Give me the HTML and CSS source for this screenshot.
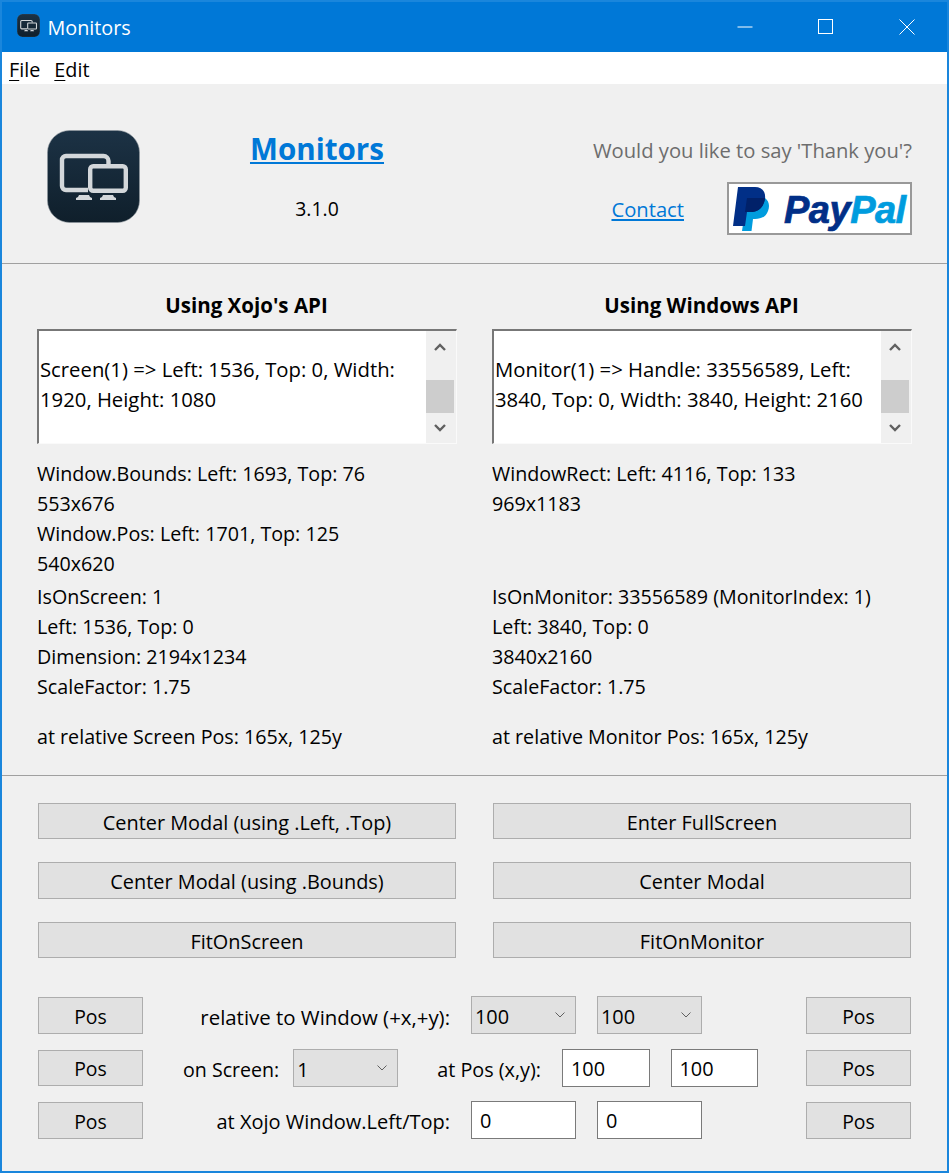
FILE: index.html
```html
<!DOCTYPE html>
<html lang="en">
<head>
<meta charset="utf-8">
<title>Monitors</title>
<link rel="stylesheet" href="styles.css">
</head>
<body>
<svg class="defs" width="0" height="0" aria-hidden="true">
  <defs>
    <linearGradient id="tile" x1="0" y1="0" x2="0" y2="1">
      <stop offset="0" stop-color="#1c3245"/>
      <stop offset="1" stop-color="#0f1f2b"/>
    </linearGradient>
    <symbol id="appicon" viewBox="0 0 93 93">
      <rect x="0.5" y="0.5" width="92" height="92" rx="22" fill="url(#tile)" stroke="#8f979d" stroke-width="0.6"/>
      <path d="M61.5 34V31a5 5 0 0 0-5-5H19a4 4 0 0 0-4 4v26a4 4 0 0 0 4 4h22" fill="none" stroke="#d3d7da" stroke-width="4.4"/>
      <rect x="43.2" y="36.2" width="35.6" height="24.6" rx="3" fill="none" stroke="#d3d7da" stroke-width="4.4"/>
      <path d="M32 65h10l1 2 2 1v2H29v-2l2-1zM56 65h10l1 2 2 1v2H53v-2l2-1z" fill="#d3d7da"/>
    </symbol>
  </defs>
</svg>
<div class="window">
  <header class="titlebar">
    <svg class="titleicon"><use href="#appicon"/></svg>
    <span class="titletext">Monitors</span>
    <div class="winbtns">
      <svg class="winbtn" viewBox="0 0 16 16"><path d="M0.5 8h15" stroke="#fff" fill="none"/></svg>
      <svg class="winbtn" viewBox="0 0 16 16"><rect x="0.5" y="0.5" width="14" height="14" stroke="#fff" fill="none"/></svg>
      <svg class="winbtn" viewBox="0 0 16 16"><path d="M0.5 0.5l15 15M15.5 0.5l-15 15" stroke="#fff" fill="none"/></svg>
    </div>
  </header>
  <nav class="menubar"><span class="menuitem"><u>F</u>ile</span><span class="menuitem"><u>E</u>dit</span></nav>
  <section class="about">
    <div class="about-icon"><svg class="logo"><use href="#appicon"/></svg></div>
    <div class="about-name">
      <a class="apptitle">Monitors</a>
      <div class="version">3.1.0</div>
    </div>
    <div class="about-thanks">
      <div class="thanks">Would you like to say 'Thank you'?</div>
      <div class="thanks-row">
        <a class="contact">Contact</a>
        <div class="paypal">
          <svg class="pp-mark" viewBox="0 0 36 44">
            <path d="M14 11H32C36 14 37 19 35 24C33 30 28 32 22 32H20L18.5 44H9Z" fill="#009cde"/>
            <path d="M5 0H22C29 0 33 5 32 12C30 21 25 25 17 25H14L12 39H0Z" fill="#012f87"/>
            <path d="M14 11H32C31 20 26 25 17 25H12Z" fill="#012169"/>
          </svg>
          <span class="pp-word"><span class="pp-pay">Pay</span><span class="pp-pal">Pal</span></span>
        </div>
      </div>
    </div>
  </section>
  <hr class="rule">
  <section class="info">
    <div class="col">
      <h2 class="colhead">Using Xojo's API</h2>
      <div class="listbox">
        <div class="listtext">Screen(1) =&gt; Left: 1536, Top: 0, Width: 1920, Height: 1080</div>
        <div class="scroll">
          <svg class="arrow" viewBox="0 0 12 8"><path d="M1 7l5-5 5 5" fill="none" stroke="#606060" stroke-width="2.4"/></svg>
          <div class="thumb"></div>
          <svg class="arrow" viewBox="0 0 12 8"><path d="M1 1l5 5 5-5" fill="none" stroke="#606060" stroke-width="2.4"/></svg>
        </div>
      </div>
      <div class="lines first">
        <div>Window.Bounds: Left: 1693, Top: 76</div>
        <div>553x676</div>
        <div>Window.Pos: Left: 1701, Top: 125</div>
        <div>540x620</div>
      </div>
      <div class="lines second">
        <div>IsOnScreen: 1</div>
        <div>Left: 1536, Top: 0</div>
        <div>Dimension: 2194x1234</div>
        <div>ScaleFactor: 1.75</div>
      </div>
      <div class="lines third"><div>at relative Screen Pos: 165x, 125y</div></div>
    </div>
    <div class="col">
      <h2 class="colhead">Using Windows API</h2>
      <div class="listbox">
        <div class="listtext">Monitor(1) =&gt; Handle: 33556589, Left: 3840, Top: 0, Width: 3840, Height: 2160</div>
        <div class="scroll">
          <svg class="arrow" viewBox="0 0 12 8"><path d="M1 7l5-5 5 5" fill="none" stroke="#606060" stroke-width="2.4"/></svg>
          <div class="thumb"></div>
          <svg class="arrow" viewBox="0 0 12 8"><path d="M1 1l5 5 5-5" fill="none" stroke="#606060" stroke-width="2.4"/></svg>
        </div>
      </div>
      <div class="lines first">
        <div>WindowRect: Left: 4116, Top: 133</div>
        <div>969x1183</div>
        <div>&nbsp;</div>
        <div>&nbsp;</div>
      </div>
      <div class="lines second">
        <div>IsOnMonitor: 33556589 (MonitorIndex: 1)</div>
        <div>Left: 3840, Top: 0</div>
        <div>3840x2160</div>
        <div>ScaleFactor: 1.75</div>
      </div>
      <div class="lines third"><div>at relative Monitor Pos: 165x, 125y</div></div>
    </div>
  </section>
  <hr class="rule">
  <section class="actions">
    <button class="btn">Center Modal (using .Left, .Top)</button>
    <button class="btn">Enter FullScreen</button>
    <button class="btn">Center Modal (using .Bounds)</button>
    <button class="btn">Center Modal</button>
    <button class="btn">FitOnScreen</button>
    <button class="btn">FitOnMonitor</button>
  </section>
  <section class="positions">
    <div class="posrow">
      <button class="btn pos">Pos</button>
      <div class="posmid wide">
        <span class="poslabel big">relative to Window (+x,+y):</span>
        <div class="combo"><span>100</span><svg class="chev" viewBox="0 0 10 6"><path d="M0.5 0.5l4.5 4.5 4.5-4.5" fill="none" stroke="#606060"/></svg></div>
        <div class="combo"><span>100</span><svg class="chev" viewBox="0 0 10 6"><path d="M0.5 0.5l4.5 4.5 4.5-4.5" fill="none" stroke="#606060"/></svg></div>
      </div>
      <button class="btn pos">Pos</button>
    </div>
    <div class="posrow middle">
      <button class="btn pos">Pos</button>
      <div class="posmid narrow">
        <span class="poslabel gap14">on Screen:</span>
        <div class="combo"><span>1</span><svg class="chev" viewBox="0 0 10 6"><path d="M0.5 0.5l4.5 4.5 4.5-4.5" fill="none" stroke="#606060"/></svg></div>
        <span class="poslabel push">at Pos (x,y):</span>
        <div class="field short">100</div>
        <div class="field short">100</div>
      </div>
      <button class="btn pos">Pos</button>
    </div>
    <div class="posrow">
      <button class="btn pos">Pos</button>
      <div class="posmid wide">
        <span class="poslabel">at Xojo Window.Left/Top:</span>
        <div class="field">0</div>
        <div class="field">0</div>
      </div>
      <button class="btn pos">Pos</button>
    </div>
  </section>
</div>
</body>
</html>
```
FILE: styles.css
```css
* { box-sizing: border-box; }
html, body { margin: 0; padding: 0; }
body {
  width: 949px;
  height: 1173px;
  overflow: hidden;
  background: #f0f0f0;
  font-family: "Open Sans", "Noto Sans", sans-serif;
  font-size: 19.9px;
  line-height: 30px;
  color: #000;
}
.defs { position: absolute; }
.window {
  width: 949px;
  height: 1173px;
  border: 2px solid #1a86dc;
  background: #f0f0f0;
  display: flex;
  flex-direction: column;
}
.titlebar {
  height: 50px;
  flex: none;
  background: #0078d7;
  color: #fff;
  display: flex;
  align-items: center;
  padding-left: 14.5px;
}
.titleicon { width: 23px; height: 23px; margin: 0 8px 3px 0; }
.titletext { font-size: 19.8px; margin-top: 1px; }
.winbtns {
  margin-left: auto;
  display: flex;
  gap: 65px;
  padding-right: 32px;
  margin-top: -1px;
}
.winbtn { width: 16px; height: 16px; }
.menubar {
  height: 32px;
  flex: none;
  background: #fff;
  display: flex;
  align-items: center;
  gap: 14px;
  padding-left: 7px;
  padding-top: 4px;
  font-size: 19.8px;
}
.about {
  height: 179px;
  flex: none;
  display: grid;
  grid-template-columns: 138px 354px 1fr;
  padding: 44px 35px 0 0;
}
.about-icon { padding: 2px 0 0 44.5px; }
.logo { display: block; width: 93px; height: 93px; }
.about-name { display: flex; flex-direction: column; align-items: center; }
.apptitle {
  font-size: 29.6px;
  line-height: 42px;
  font-weight: 700;
  color: #0078d7;
  text-decoration: underline;
}
.version { margin-top: 24px; font-size: 19.4px; }
.about-thanks { display: flex; flex-direction: column; align-items: flex-end; padding-top: 7px; }
.thanks { color: #6d6d6d; font-size: 20.2px; }
.thanks-row { display: flex; align-items: center; gap: 43px; margin-top: 17px; }
.contact { color: #0078d7; text-decoration: underline; font-size: 20.2px; }
.paypal {
  width: 185px;
  height: 53px;
  border: 2px solid #999;
  background: #fff;
  display: flex;
  align-items: center;
  padding-left: 4px;
  gap: 15px;
}
.pp-mark { width: 36px; height: 44px; flex: none; }
.pp-word {
  font-family: "Liberation Sans", sans-serif;
  font-style: italic;
  font-weight: 700;
  font-size: 38px;
  letter-spacing: -0.5px;
  line-height: 1;
  margin-top: 3px;
  -webkit-text-stroke: 0.7px currentColor;
}
.pp-pay { color: #012f87; }
.pp-pal { color: #009cde; }
.rule { margin: 0; height: 1px; border: 0; background: #a0a0a0; flex: none; }
.info {
  height: 511px;
  flex: none;
  display: grid;
  grid-template-columns: 420px 420px;
  column-gap: 35px;
  padding: 26px 35px 0;
}
.colhead {
  margin: 0 0 9px;
  padding-right: 1px;
  font-size: 20.5px;
  line-height: 30px;
  font-weight: 700;
  text-align: center;
}
.listbox {
  height: 115px;
  display: flex;
  background: #fff;
  border-top: 2px solid #777;
  border-left: 2px solid #777;
  border-right: 1px solid #fafafa;
  border-bottom: 1px solid #fafafa;
}
.listtext { flex: 1; padding: 23px 0 0 1px; font-size: 20.3px; }
.scroll {
  width: 30px;
  flex: none;
  background: #f0f0f0;
  display: flex;
  flex-direction: column;
  align-items: center;
  padding: 12px 2px 0 0;
}
.arrow { width: 12px; height: 8px; flex: none; }
.thumb { width: 100%; height: 33px; margin: 29px 0 11px; background: #cdcdcd; flex: none; }
.lines { font-size: 19.7px; }
.first { margin-top: 15px; }
.second { margin-top: 3px; }
.third { margin-top: 20px; }
.actions {
  flex: none;
  display: grid;
  grid-template-columns: 418px 418px;
  grid-template-rows: 36px 37px 36px;
  column-gap: 37px;
  row-gap: 23px;
  padding: 27px 36px 0;
}
.btn {
  background: #e1e1e1;
  border: 1px solid #adadad;
  font: inherit;
  color: inherit;
  padding: 3px 0 0;
}
.positions {
  flex: none;
  display: flex;
  flex-direction: column;
  gap: 15px;
  padding: 39px 36px 0;
}
.posrow { display: flex; align-items: flex-start; height: 37px; }
.middle { margin-top: 1px; }
.pos { width: 105px; height: 37px; flex: none; font-size: 19.4px; padding-top: 2px; }
.middle .pos { height: 36px; }
.posmid { flex: 1; height: 38px; margin-top: -1px; display: flex; align-items: center; justify-content: flex-end; gap: 21px; }
.poslabel { padding-top: 3px; font-size: 20px; }
.big { font-size: 20.4px; }
.wide { padding-right: 104px; }
.narrow { padding-right: 48px; }
.gap14 { margin-right: -7px; font-size: 19.6px; }
.push { margin-left: 18px; font-size: 19.8px; }
.combo {
  width: 105px;
  height: 38px;
  background: #e1e1e1;
  border: 1px solid #adadad;
  display: flex;
  align-items: center;
  justify-content: space-between;
  padding: 3px 10px 0 3px;
}
.chev { width: 10px; height: 6px; margin-bottom: 3px; }
.field {
  width: 105px;
  height: 38px;
  background: #fff;
  border: 1px solid #7a7a7a;
  display: flex;
  align-items: center;
  padding: 2px 0 0 8px;
}
.short { width: 87.5px; }
u { text-underline-offset: 3px; }
```
